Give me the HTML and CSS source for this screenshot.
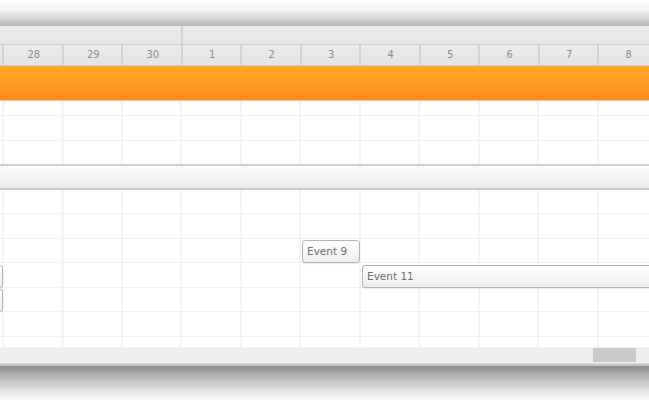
FILE: index.html
```html
<!DOCTYPE html>
<html>
<head>
<meta charset="utf-8">
<link rel="stylesheet" href="styles.css">
</head>
<body>
<div class="page">
  <div class="shadow-top"></div>
  <div class="hdr1">
    <div class="hdr1-cell hdr1-left"></div>
    <div class="hdr1-cell"></div>
  </div>
  <div class="hdr2">
    <div class="day"></div>
    <div class="day">28</div>
    <div class="day">29</div>
    <div class="day">30</div>
    <div class="day">1</div>
    <div class="day">2</div>
    <div class="day">3</div>
    <div class="day">4</div>
    <div class="day">5</div>
    <div class="day">6</div>
    <div class="day">7</div>
    <div class="day">8</div>
    <div class="day"></div>
  </div>
  <div class="allday"></div>
  <div class="section grid">
    <div class="row r-short"></div>
    <div class="row r25"></div>
    <div class="row r25 last"></div>
  </div>
  <div class="group"></div>
  <div class="section grid events-area">
    <div class="row r24"></div>
    <div class="row r25"></div>
    <div class="row r24"></div>
    <div class="row r25"></div>
    <div class="row r24"></div>
    <div class="row r25"></div>
    <div class="row r-tail"></div>
    <div class="event ev-left1"></div>
    <div class="event ev-left2"></div>
    <div class="event ev9">Event 9</div>
    <div class="event ev11">Event 11</div>
  </div>
  <div class="hscroll">
    <div class="thumb"></div>
  </div>
  <div class="shadow-bottom"></div>
</div>
</body>
</html>
```

FILE: styles.css
```css
html, body {
  margin: 0;
  padding: 0;
  background: #ffffff;
}
.page {
  width: 649px;
  height: 400px;
  overflow: hidden;
  font-family: "DejaVu Sans", "Liberation Sans", sans-serif;
}
.shadow-top {
  height: 25px;
  background: linear-gradient(to bottom, #ffffff 0%, #f4f4f4 35%, #d6d6d6 75%, #b9b9b9 100%);
}
.hdr1 {
  display: flex;
  height: 18px;
  border-top: 1px solid #b6b6b6;
  border-bottom: 1px solid #d2d2d2;
  background: linear-gradient(to bottom, #ececec, #e6e6e6);
}
.hdr1-cell {
  flex: 1;
}
.hdr1-left {
  flex: 0 0 180.5px;
  border-right: 2px solid #d4d4d4;
}
.hdr2 {
  display: flex;
  height: 20px;
  margin-left: -55.5px;
  border-bottom: 1px solid #d0d0d0;
  background: linear-gradient(to bottom, #ececec, #e4e4e4);
}
.day {
  flex: 0 0 59.5px;
  box-sizing: border-box;
  border-right: 2px solid #d3d3d3;
  text-align: center;
  font-size: 10px;
  line-height: 20px;
  color: #8f8f8f;
  padding-left: 2px;
}
.allday {
  height: 34px;
  background: linear-gradient(to bottom, #ffa82a 0%, #ff9b22 50%, #ff8b1c 100%);
  border-bottom: 1px solid #ffcb8a;
}
.grid {
  background-image: repeating-linear-gradient(to right, #f4f4f4 0, #f4f4f4 2px, transparent 2px, transparent 59.5px);
  background-position: 2px 0;
}
.section {
  display: flex;
  flex-direction: column;
}
.row {
  box-sizing: border-box;
  border-bottom: 1px solid #f1f1f1;
}
.r-short { height: 15px; }
.r24 { height: 24px; }
.r25 { height: 25px; }
.r-tail { height: 10px; border-bottom: none; }
.row.last {
  border-bottom: 2px solid #cecece;
}
.group {
  height: 22px;
  background: linear-gradient(to bottom, #fbfbfb, #ececec);
  border-bottom: 2px solid #c9c9c9;
}
.events-area {
  position: relative;
}
.event {
  position: absolute;
  box-sizing: border-box;
  height: 23px;
  border: 1px solid #b3b3b3;
  border-radius: 3px;
  background: linear-gradient(to bottom, #ffffff, #ededed);
  box-shadow: 0 1px 1px rgba(0, 0, 0, 0.08);
  font-size: 10.5px;
  line-height: 21px;
  color: #707070;
  padding-left: 4px;
  white-space: nowrap;
}
.ev9 {
  left: 302px;
  top: 50px;
  width: 58px;
}
.ev11 {
  left: 362px;
  top: 75px;
  width: 300px;
}
.ev-left1 {
  left: -20px;
  top: 75px;
  width: 23px;
}
.ev-left2 {
  left: -20px;
  top: 99px;
  width: 23px;
}
.hscroll {
  position: relative;
  height: 15px;
  background: #eeeeee;
  border-top: 1px solid #f3f3f3;
  border-bottom: 1px solid #dadada;
  display: flex;
  justify-content: flex-end;
  padding-right: 13px;
}
.thumb {
  width: 43px;
  height: 14px;
  background: #c9c9c9;
}
.shadow-bottom {
  height: 40px;
  border-top: 2px solid #c4c4c4;
  background: linear-gradient(to bottom, #8a8a8a 0%, #b4b4b4 25%, #e0e0e0 60%, #ffffff 90%);
}
```
